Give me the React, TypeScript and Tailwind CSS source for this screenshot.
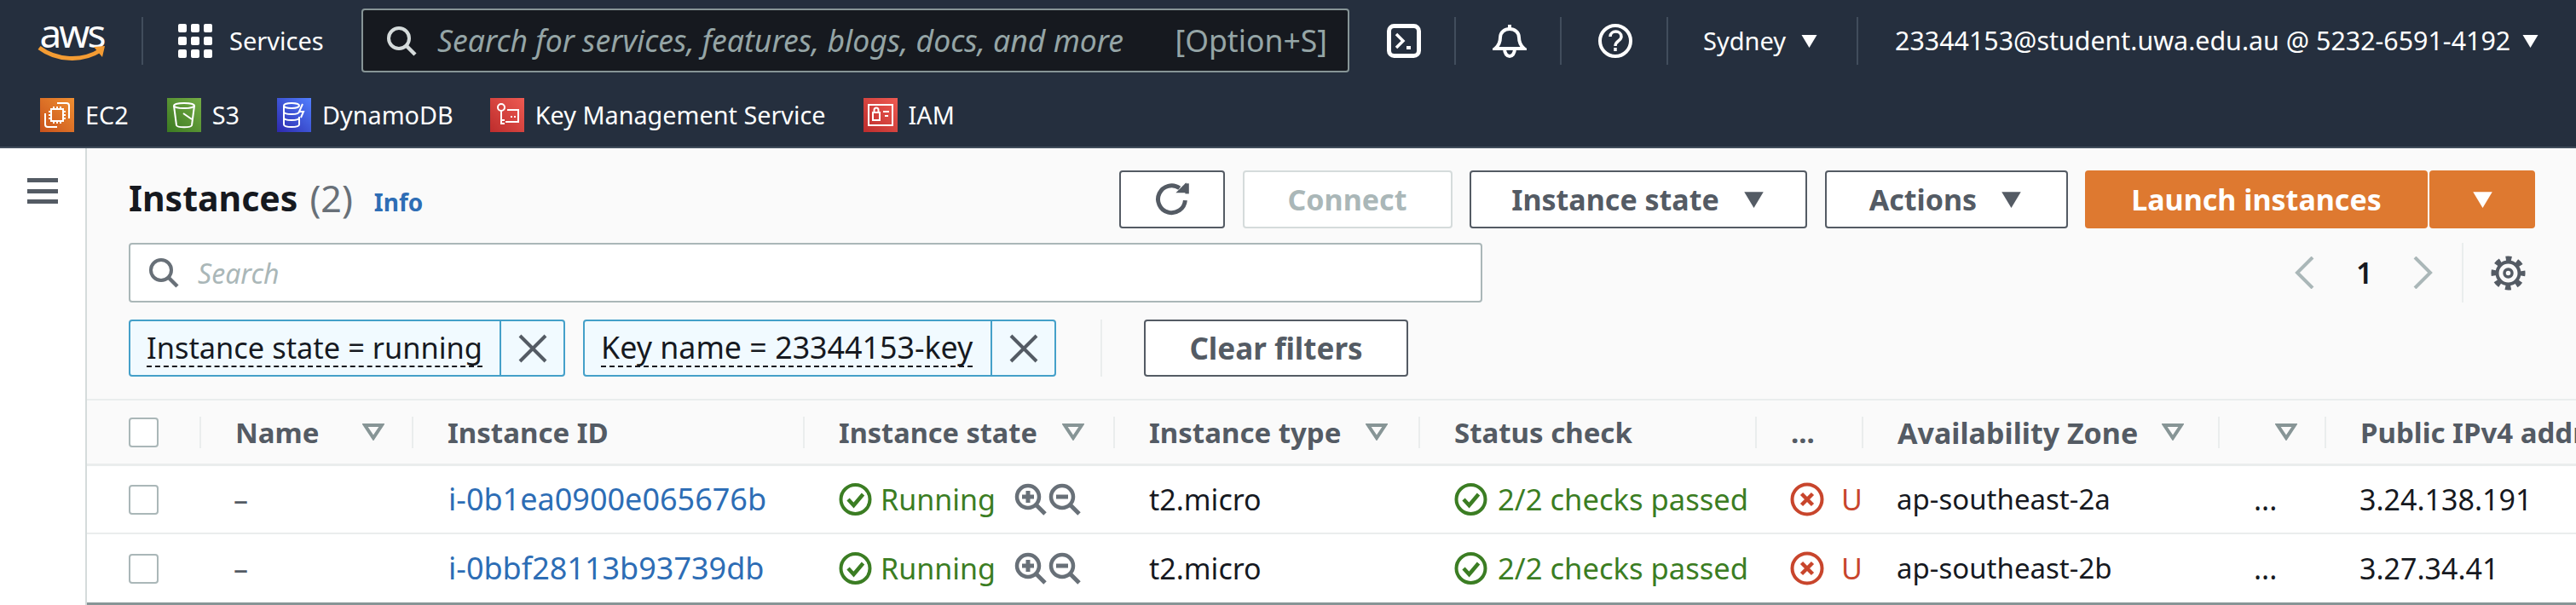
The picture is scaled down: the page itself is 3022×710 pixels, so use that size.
const font = "font-['Noto_Sans',sans-serif]";

function Caret({ className }: { className: string }) {
  return (
    <svg className={className} viewBox="0 0 20 16" fill="currentColor">
      <path d="M1 1h18l-9 15z" />
    </svg>
  );
}

function FilterIcon({ className }: { className: string }) {
  return (
    <svg className={className} viewBox="0 0 26 20" fill="none" stroke="#879596" strokeWidth="4">
      <path d="M3 2h20l-10 15z" />
    </svg>
  );
}

function SearchIcon({ className }: { className: string }) {
  return (
    <svg className={className} viewBox="0 0 36 36" fill="none" stroke="currentColor" strokeWidth="4">
      <circle cx="15" cy="15" r="12" />
      <path d="M24 24l10 10" strokeWidth="4.5" />
    </svg>
  );
}

function ZoomIcon({ plus }: { plus?: boolean }) {
  return (
    <svg className="w-[38px] h-[38px] shrink-0" viewBox="0 0 38 38" fill="none" stroke="#687078" strokeWidth="4.5">
      <circle cx="16" cy="16" r="13" />
      <path d="M25 25l11 11" strokeWidth="5" />
      <path d="M9 16h14" strokeWidth="5" />
      {plus && <path d="M16 9v14" strokeWidth="5" />}
    </svg>
  );
}

function OkIcon() {
  return (
    <svg className="w-[39px] h-[40px] shrink-0" viewBox="0 0 39 40" fill="none" stroke="#3b7d23" strokeWidth="4">
      <circle cx="19.5" cy="20" r="17" />
      <path d="M11 20l6.5 7 11-13" strokeWidth="4.5" />
    </svg>
  );
}

function ErrorIcon() {
  return (
    <svg className="w-[40px] h-[40px] shrink-0" viewBox="0 0 40 40" fill="none" stroke="#c8452c" strokeWidth="4">
      <circle cx="20" cy="20" r="17.5" />
      <path d="M13.5 13.5l13 13M26.5 13.5l-13 13" strokeWidth="4.5" />
    </svg>
  );
}

function CloseX() {
  return (
    <svg className="w-[34px] h-[34px]" viewBox="0 0 34 34" fill="none" stroke="#545b64" strokeWidth="4">
      <path d="M2 2l30 30M32 2L2 32" />
    </svg>
  );
}

function Divider() {
  return <div className="w-[2px] h-[56px] bg-[#414d5c] shrink-0" />;
}

const favorites = [
  {
    label: "EC2",
    bg: "bg-gradient-to-tr from-[#c8511b] to-[#ef8f32]",
    glyph: (
      <g>
        <rect x="13" y="13" width="14" height="14" />
        <path d="M16 10v3M20 10v3M24 10v3M16 27v3M20 27v3M24 27v3M10 16h3M10 20h3M10 24h3M27 16h3M27 20h3M27 24h3" />
        <path d="M20 6h11a3 3 0 0 1 3 3v15M20 34H9a3 3 0 0 1-3-3V18" />
      </g>
    ),
  },
  {
    label: "S3",
    bg: "bg-gradient-to-tr from-[#3b7a21] to-[#75ad45]",
    glyph: (
      <g>
        <ellipse cx="20" cy="9" rx="12" ry="3" />
        <path d="M8 9l3 23c1 3 17 3 18 0l3-23" />
        <path d="M19 18l10 7" />
      </g>
    ),
  },
  {
    label: "DynamoDB",
    bg: "bg-gradient-to-tr from-[#2e27ad] to-[#527fff]",
    glyph: (
      <g>
        <ellipse cx="17" cy="9" rx="9" ry="3" />
        <path d="M8 9v22c0 4 18 4 18 0V22M8 16c0 4 18 4 18 0M8 23c0 4 18 4 18 0" />
        <path d="M30 7l-4 9h5l-3 7" />
      </g>
    ),
  },
  {
    label: "Key Management Service",
    bg: "bg-gradient-to-tr from-[#bd2c2c] to-[#ee5a52]",
    glyph: (
      <g>
        <circle cx="13" cy="11" r="4" />
        <path d="M13 15v16M13 26h4M13 30h4" />
        <path d="M20 14h13v14H18" />
        <path d="M24 22h2M28 22h2" />
      </g>
    ),
  },
  {
    label: "IAM",
    bg: "bg-gradient-to-tr from-[#bd2c2c] to-[#ee5a52]",
    glyph: (
      <g>
        <rect x="6" y="8" width="28" height="24" />
        <rect x="11" y="17" width="8" height="9" />
        <path d="M12.5 17v-3a2.5 2.5 0 0 1 5 0v3M23 16h7M25 21h4" />
      </g>
    ),
  },
];

const favSpacing = ["mr-[45px]", "mr-[44px]", "mr-[43px]", "mr-[44px]", ""];

// column widths follow the separators in the table header
const colWidths = [
  "w-[132px]",
  "w-[249px]",
  "w-[459px]",
  "w-[364px]",
  "w-[358px]",
  "w-[395px]",
  "w-[125px]",
  "w-[418px]",
  "w-[125px]",
  "w-[295px]",
];

const headers = [
  { title: "Name", filter: "ml-[51px]", size: "text-[33px]" },
  { title: "Instance ID", size: "text-[33px]" },
  { title: "Instance state", filter: "ml-[29px]", size: "text-[32.5px]" },
  { title: "Instance type", filter: "ml-[29px]", size: "text-[33px]" },
  { title: "Status check", size: "text-[33px]" },
  { title: "...", size: "text-[33px]" },
  { title: "Availability Zone", filter: "ml-[28px]", size: "text-[34px]" },
  { title: "", filter: "ml-[25px]", size: "text-[33px]" },
  { title: "Public IPv4 address", size: "text-[33px]" },
];

const rows = [
  { id: "i-0b1ea0900e065676b", zone: "ap-southeast-2a", ip: "3.24.138.191" },
  { id: "i-0bbf28113b93739db", zone: "ap-southeast-2b", ip: "3.27.34.41" },
];

function Checkbox() {
  return <div className="w-[35px] h-[35px] rounded-[4px] border-2 border-[#aab7b8] bg-white ml-[49px] shrink-0" />;
}

function Chip({ label, textWidth, textSize }: { label: string; textWidth: string; textSize: string }) {
  return (
    <div className="flex items-stretch h-[67px] rounded-[4px] border-2 border-[#44a0c9] bg-[#f1faff]">
      <div className={`flex items-center pl-[19px] ${textWidth}`}>
        <span className={`${textSize} leading-[43px] text-[#16191f] whitespace-nowrap border-b-2 border-dashed border-[#16191f]`}>
          {label}
        </span>
      </div>
      <div className="w-[75px] border-l-2 border-[#44a0c9] flex items-center justify-center">
        <CloseX />
      </div>
    </div>
  );
}

function ActionButton({ label, width, caret }: { label: string; width: string; caret?: boolean }) {
  return (
    <button className={`${width} h-[68px] rounded-[4px] border-2 border-[#545b64] bg-white flex items-center justify-center gap-[27px] text-[#545b64] text-[34px] font-bold`}>
      <span className="whitespace-nowrap">{label}</span>
      {caret && <Caret className="w-[27px] h-[20px]" />}
    </button>
  );
}

export default function App() {
  return (
    <div className={`${font} w-[3022px] h-[710px] overflow-hidden flex flex-col bg-white`}>
      {/* top nav */}
      <header className="h-[174px] shrink-0 bg-[#252f3e] border-b-2 border-[#414d5c] text-white flex flex-col">
        <div className="h-[95px] shrink-0 flex items-center">
          <div className="ml-[44px] w-[80px] h-[50px] flex flex-col items-center shrink-0">
            <span className="text-[46px] leading-[30px] tracking-[-3px] h-[30px]">aws</span>
            <svg className="w-[80px] h-[20px]" viewBox="0 0 80 20" fill="none">
              <path d="M2 3c20 15 50 17 72 3" stroke="#f49c33" strokeWidth="5" />
              <path d="M66 2l13-1-3 13" fill="#f49c33" />
            </svg>
          </div>
          <div className="ml-[42px]"><Divider /></div>
          <div className="ml-[41px] grid grid-cols-3 gap-[5px] w-[40px] h-[40px] shrink-0">
            {Array.from({ length: 9 }).map((_, i) => (
              <div key={i} className="bg-white rounded-[2px]" />
            ))}
          </div>
          <span className="ml-[20px] w-[112px] text-[29px] whitespace-nowrap">Services</span>
          <div className="ml-[43px] w-[1159px] h-[75px] rounded-[4px] border-2 border-[#879596] bg-[#16191f] flex items-center pl-[27px] pr-[24px] text-[#95a5a6] shrink-0">
            <SearchIcon className="w-[36px] h-[36px] text-[#d5dbdb] shrink-0" />
            <span className="ml-[24px] text-[35.6px] italic whitespace-nowrap">Search for services, features, blogs, docs, and more</span>
            <span className="ml-auto text-[35.6px] whitespace-nowrap">[Option+S]</span>
          </div>
          <svg className="ml-[44px] w-[40px] h-[40px] shrink-0" viewBox="0 0 40 40" fill="none" stroke="white" strokeWidth="5">
            <rect x="2.5" y="2.5" width="35" height="35" rx="6" />
            <path d="M11 12l8 8-8 8" strokeWidth="3.5" />
            <path d="M23 28h5" strokeWidth="4" />
          </svg>
          <div className="ml-[39px]"><Divider /></div>
          <svg className="ml-[43px] w-[40px] h-[40px] shrink-0" viewBox="0 0 40 40" fill="none" stroke="white" strokeWidth="4">
            <path d="M20 1v5M3 29c5-4 6-9 6-13 0-6 5-10 11-10s11 4 11 10c0 4 1 9 6 13z" />
            <path d="M14 29c0 12 12 12 12 0" />
          </svg>
          <div className="ml-[39px]"><Divider /></div>
          <svg className="ml-[43px] w-[40px] h-[40px] shrink-0" viewBox="0 0 40 40" fill="none" stroke="white" strokeWidth="4">
            <circle cx="20" cy="20" r="18" />
            <path d="M14 15c0-8 13-8 13 0 0 5-7 5-7 11" strokeWidth="3.5" />
            <path d="M20 28v4" strokeWidth="3.5" />
          </svg>
          <div className="ml-[40px]"><Divider /></div>
          <span className="ml-[41px] w-[98px] text-[29px] whitespace-nowrap">Sydney</span>
          <Caret className="ml-[16px] w-[21px] h-[16px] shrink-0" />
          <div className="ml-[45px]"><Divider /></div>
          <span className="ml-[43px] w-[718px] text-[30.4px] whitespace-nowrap">23344153@student.uwa.edu.au @ 5232-6591-4192</span>
          <Caret className="ml-[17px] w-[21px] h-[16px] shrink-0" />
        </div>
        <div className="flex items-center h-[40px] pl-[47px] mt-[20px]">
          {favorites.map((f, i) => (
            <div key={f.label} className={`flex items-center gap-[13px] ${favSpacing[i]}`}>
              <div className={`w-[40px] h-[40px] shrink-0 ${f.bg}`}>
                <svg className="w-[40px] h-[40px]" viewBox="0 0 40 40" fill="none" stroke="white" strokeWidth="2">
                  {f.glyph}
                </svg>
              </div>
              <span className="text-[28.8px] whitespace-nowrap">{f.label}</span>
            </div>
          ))}
        </div>
      </header>

      <div className="flex flex-1 min-h-0">
        {/* collapsed side nav */}
        <aside className="w-[100px] shrink-0 bg-white pl-[32px] pt-[35px] flex flex-col gap-[7.5px]">
          <div className="w-[36px] h-[5px] bg-[#545b64]" />
          <div className="w-[36px] h-[5px] bg-[#545b64]" />
          <div className="w-[36px] h-[5px] bg-[#545b64]" />
        </aside>

        <main className="w-[2922px] border-l-2 border-[#d5dbdb] bg-[#fafafa] flex flex-col overflow-hidden">
          <section className="pl-[49px] pt-[26px]">
            {/* title row with actions */}
            <div className="flex items-center h-[68px]">
              <h1 className="text-[41px] font-bold text-[#16191f] whitespace-nowrap mt-[-2px]">Instances</h1>
              <span className="ml-[14px] text-[43px] text-[#687078] mt-[-2px]">(2)</span>
              <span className="ml-[25px] mt-[6px] text-[28px] font-bold text-[#2d6db5]">Info</span>
              <div className="ml-auto flex items-center gap-[20.5px] pr-[48px]">
                <button className="w-[124px] h-[68px] rounded-[4px] border-2 border-[#545b64] bg-white flex items-center justify-center text-[#545b64]">
                  <svg className="w-[44px] h-[44px]" viewBox="0 0 40 40" fill="none" stroke="currentColor" strokeWidth="4.5">
                    <path d="M34 21a14.5 14.5 0 1 1-6-13" />
                    <path d="M35 2v11H24" fill="currentColor" strokeWidth="0" />
                    <path d="M36 3v11" strokeWidth="4" />
                  </svg>
                </button>
                <button className="w-[246px] h-[68px] rounded-[4px] border-2 border-[#d5dbdb] bg-white text-[#aab7b8] text-[34px] font-bold">Connect</button>
                <ActionButton label="Instance state" width="w-[396px]" caret />
                <ActionButton label="Actions" width="w-[285px]" caret />
                <div className="flex gap-[2px]">
                  <button className="w-[402px] h-[68px] rounded-[4px] bg-[#de7930] text-white text-[34px] font-bold whitespace-nowrap">Launch instances</button>
                  <button className="w-[124px] h-[68px] rounded-[4px] bg-[#de7930] text-white flex items-center justify-center">
                    <Caret className="w-[27px] h-[20px]" />
                  </button>
                </div>
              </div>
            </div>

            {/* search + pagination */}
            <div className="flex mt-[17px] h-[70px]">
              <div className="w-[1588px] h-[70px] rounded-[4px] border-2 border-[#aab7b8] bg-white flex items-center pl-[21px]">
                <SearchIcon className="w-[36px] h-[36px] text-[#687078] shrink-0" />
                <span className="ml-[22px] mt-[2px] text-[32px] italic text-[#aab7b8]">Search</span>
              </div>
              <div className="ml-auto flex items-center pr-[59px]">
                <svg className="w-[23px] h-[38px]" viewBox="0 0 23 38" fill="none" stroke="#aab7b8" strokeWidth="4">
                  <path d="M21 1L3 19l18 18" />
                </svg>
                <span className="ml-[49px] w-[14px] text-[34px] font-semibold text-[#16191f]">1</span>
                <svg className="ml-[53px] w-[23px] h-[38px]" viewBox="0 0 23 38" fill="none" stroke="#aab7b8" strokeWidth="4">
                  <path d="M2 1l18 18L2 37" />
                </svg>
                <div className="ml-[34px] w-[2px] h-[70px] bg-[#eaeded]" />
                {/* cog: ring, dashed ring for teeth, centre ring */}
                <svg className="ml-[32px] w-[41px] h-[41px]" viewBox="0 0 41 41" fill="none" stroke="#545b64">
                  <circle cx="20.5" cy="20.5" r="13" strokeWidth="4" />
                  <circle cx="20.5" cy="20.5" r="17" strokeWidth="6" strokeDasharray="6.68 6.67" strokeDashoffset="3.34" />
                  <circle cx="20.5" cy="20.5" r="4.5" strokeWidth="3.5" />
                </svg>
              </div>
            </div>

            {/* active filters */}
            <div className="flex items-center mt-[20px] h-[67px]">
              <Chip label="Instance state = running" textWidth="w-[433px]" textSize="text-[34.4px]" />
              <div className="ml-[21px]">
                <Chip label="Key name = 23344153-key" textWidth="w-[476px]" textSize="text-[35.8px]" />
              </div>
              <div className="ml-[52px] w-[2px] h-[67px] bg-[#eaeded]" />
              <button className="ml-[49px] w-[310px] h-[67px] rounded-[4px] border-2 border-[#545b64] bg-white text-[#545b64] text-[35px] font-bold pt-[2px]">Clear filters</button>
            </div>
          </section>

          {/* table */}
          <section className="mt-[26px] border-t-2 border-[#eaeded] flex flex-col">
            <div className="flex h-[77px] border-b-[3px] border-[#eaeded] bg-[#fafafa]">
              <div className={`${colWidths[0]} flex items-center shrink-0`}>
                <Checkbox />
              </div>
              {headers.map((h, i) => (
                <div key={i} className={`${colWidths[i + 1]} shrink-0 flex items-center`}>
                  <div className="w-[2px] h-[37px] bg-[#eaeded] shrink-0" />
                  <span className={`ml-[40px] pt-[2px] ${h.size} font-bold text-[#545b64] whitespace-nowrap`}>{h.title}</span>
                  {h.filter && <FilterIcon className={`${h.filter} w-[26px] h-[20px] shrink-0`} />}
                </div>
              ))}
            </div>
            {rows.map((r, i) => (
              <div key={r.id} className={`flex text-[34px] whitespace-nowrap bg-white ${i === 0 ? "h-[80px] border-b-2 border-[#eaeded]" : "h-[83px] border-b-[3px] border-[#879596]"}`}>
                <div className={`${colWidths[0]} flex items-center shrink-0`}><Checkbox /></div>
                <div className={`${colWidths[1]} pl-[40px] flex items-center shrink-0 text-[#545b64]`}>–</div>
                <div className={`${colWidths[2]} pl-[43px] flex items-center shrink-0 text-[#2d6db5] text-[36px]`}>{r.id}</div>
                <div className={`${colWidths[3]} pl-[42px] flex items-center shrink-0 text-[#3b7d23]`}>
                  <OkIcon />
                  <span className="ml-[10px]">Running</span>
                  <div className="ml-[22px] flex gap-[2px]"><ZoomIcon plus /><ZoomIcon /></div>
                </div>
                <div className={`${colWidths[4]} pl-[42px] flex items-center shrink-0 text-[#16191f]`}>t2.micro</div>
                <div className={`${colWidths[5]} pl-[42px] flex items-center shrink-0 text-[#3b7d23] text-[34.6px]`}>
                  <OkIcon />
                  <span className="ml-[12px]">2/2 checks passed</span>
                </div>
                <div className={`${colWidths[6]} pl-[41px] flex items-center shrink-0 text-[#c8452c] overflow-hidden`}>
                  <ErrorIcon />
                  <span className="ml-[20px]">U</span>
                </div>
                <div className={`${colWidths[7]} pl-[41px] flex items-center shrink-0 text-[#16191f] text-[33px]`}>{r.zone}</div>
                <div className={`${colWidths[8]} pl-[42px] flex items-center shrink-0 text-[#16191f]`}>...</div>
                <div className={`${colWidths[9]} pl-[41px] flex items-center shrink-0 text-[#16191f]`}>{r.ip}</div>
              </div>
            ))}
          </section>
        </main>
      </div>
    </div>
  );
}
